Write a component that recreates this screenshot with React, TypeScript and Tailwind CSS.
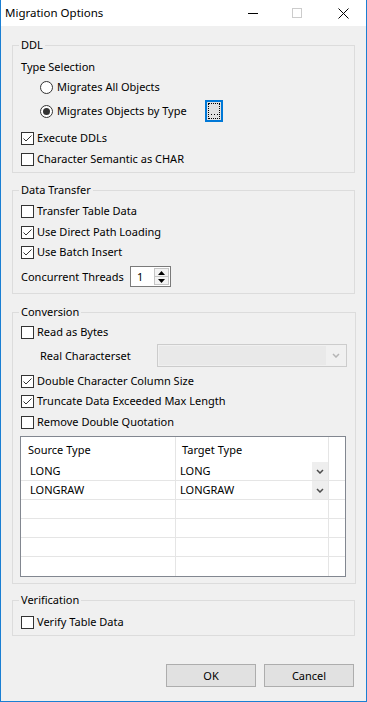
import type { ReactNode } from "react";

function CheckBox({ checked = false }: { checked?: boolean }) {
  return (
    <span className="flex h-[13px] w-[13px] shrink-0 items-center justify-center border border-[#333333] bg-white">
      {checked ? (
        <svg width="11" height="11" viewBox="0 0 11 11">
          <path d="M1.5 5.5L4 8L9.5 2.5" fill="none" stroke="#333333" strokeWidth="1" />
        </svg>
      ) : null}
    </span>
  );
}

function Radio({ checked = false }: { checked?: boolean }) {
  return (
    <span className="flex h-[13px] w-[13px] shrink-0 items-center justify-center rounded-full border border-[#333333] bg-white">
      {checked ? <span className="h-[7px] w-[7px] rounded-full bg-[#333333]" /> : null}
    </span>
  );
}

function CheckRow({
  label,
  checked,
  className = "",
}: {
  label: string;
  checked?: boolean;
  className?: string;
}) {
  return (
    <div className={`flex h-[16px] items-center gap-[3px] ${className}`}>
      <CheckBox checked={checked} />
      <span>{label}</span>
    </div>
  );
}

function GroupBox({
  title,
  className = "",
  children,
}: {
  title: string;
  className?: string;
  children: ReactNode;
}) {
  return (
    <fieldset className={`mx-[11px] border border-[#dcdcdc] px-[8px] ${className}`}>
      <legend className="ml-[-2px] px-[2px] leading-[16px]">{title}</legend>
      {children}
    </fieldset>
  );
}

function Chevron({ color = "#4d4d4d" }: { color?: string }) {
  return (
    <svg width="8" height="5" viewBox="0 0 8 5">
      <path d="M1 1L4 4L7 1" fill="none" stroke={color} strokeWidth="1.5" />
    </svg>
  );
}

const typeRows = [
  ["LONG", "LONG"],
  ["LONGRAW", "LONGRAW"],
  ["", ""],
  ["", ""],
  ["", ""],
  ["", ""],
];

export default function App() {
  return (
    <div className="flex h-[702px] w-[367px] flex-col border-x border-b border-[#1a7fd3] bg-[#f0f0f0] font-['Noto_Sans',sans-serif] text-[11px] leading-[16px] text-black">
      {/* title bar */}
      <div className="flex h-[26px] shrink-0 items-center bg-white">
        <span className="flex-1 pl-[4px] text-[11.5px]">Migration Options</span>
        <span className="flex h-full w-[46px] items-center justify-center pl-[3px]">
          <span className="h-px w-[10px] bg-black" />
        </span>
        <span className="flex h-full w-[46px] items-center justify-center">
          <span className="h-[10px] w-[10px] border border-[#cccccc]" />
        </span>
        <span className="flex h-full w-[46px] items-center justify-center">
          <svg width="11" height="11" viewBox="0 0 11 11">
            <path d="M0.5 0.5L10.5 10.5M10.5 0.5L0.5 10.5" stroke="#000000" strokeWidth="1" />
          </svg>
        </span>
      </div>

      <GroupBox title="DDL" className="mt-[11px] pb-[5px] pt-[6px]">
        <div className="h-[16px]">Type Selection</div>
        <div className="ml-[19px] mt-[4px] flex h-[16px] items-center gap-[4px]">
          <Radio />
          <span>Migrates All Objects</span>
        </div>
        <div className="ml-[19px] mt-[5px] flex h-[22px] items-center gap-[4px]">
          <Radio checked />
          <span className="w-[144px]">Migrates Objects by Type</span>
          <button
            type="button"
            aria-label="..."
            className="flex h-[22px] w-[18px] items-stretch border-2 border-[#0078d7] bg-[#e1e1e1] p-px"
          >
            <span className="flex flex-1 items-end justify-center gap-[2px] border border-dotted border-black pb-[3px]">
              <span className="h-px w-px bg-black" />
              <span className="h-px w-px bg-black" />
              <span className="h-px w-px bg-black" />
            </span>
          </button>
        </div>
        <CheckRow label="Execute DDLs" checked className="mt-[8px]" />
        <CheckRow label="Character Semantic as CHAR" className="mt-[5px]" />
      </GroupBox>

      <GroupBox title="Data Transfer" className="mt-[9px] pb-[6px] pt-[5px]">
        <CheckRow label="Transfer Table Data" />
        <CheckRow label="Use Direct Path Loading" checked className="mt-[5px]" />
        <CheckRow label="Use Batch Insert" checked className="mt-[4px]" />
        <div className="mt-[6px] flex h-[21px] items-center">
          <span className="w-[109px] whitespace-nowrap">Concurrent Threads</span>
          <div className="flex h-[21px] w-[41px] border border-[#7a7a7a] bg-white">
            <span className="flex flex-1 items-center pl-[6px]">1</span>
            <div className="my-[1px] mr-[1px] flex w-[15px] flex-col border border-[#c5c5c5]">
              <span className="flex flex-1 items-center justify-center border-b border-[#c5c5c5] bg-[#f3f3f3]">
                <svg width="7" height="4" viewBox="0 0 7 4">
                  <polygon points="0,4 3.5,0 7,4" fill="#000000" />
                </svg>
              </span>
              <span className="flex flex-1 items-center justify-center bg-[#f3f3f3]">
                <svg width="7" height="4" viewBox="0 0 7 4">
                  <polygon points="0,0 3.5,4 7,0" fill="#000000" />
                </svg>
              </span>
            </div>
          </div>
        </div>
      </GroupBox>

      <GroupBox title="Conversion" className="mt-[10px] pb-[6px] pt-[4px]">
        <CheckRow label="Read as Bytes" />
        <div className="mt-[4px] flex h-[23px] items-center">
          <span className="ml-[19px] w-[117px]">Real Characterset</span>
          <div className="flex h-[23px] w-[190px] border border-[#cccccc] bg-[#f0f0f0] p-px">
            <span className="flex-1 bg-[#e9e9e9]" />
            <span className="flex w-[19px] items-center justify-center">
              <Chevron color="#b5b5b5" />
            </span>
          </div>
        </div>
        <CheckRow label="Double Character Column Size" checked className="mt-[6px]" />
        <CheckRow label="Truncate Data Exceeded Max Length" checked className="mt-[4px]" />
        <CheckRow label="Remove Double Quotation" className="mt-[5px]" />

        <div className="ml-[-1px] mt-[6px] h-[141px] w-[326px] border border-[#828790] bg-white">
          <div className="flex h-[25px]">
            <div className="flex w-[155px] items-center border-r border-[#e5e5e5] pl-[7px]">
              Source Type
            </div>
            <div className="flex w-[153px] items-center border-r border-[#e5e5e5] pl-[6px]">
              Target Type
            </div>
            <div className="flex-1" />
          </div>
          {typeRows.map((row, i) => (
            <div
              key={i}
              className={`flex h-[19px] ${i < typeRows.length - 1 ? "border-b border-[#e5e5e5]" : ""}`}
            >
              <div className="flex w-[155px] items-center border-r border-[#e5e5e5] pl-[9px]">
                {row[0]}
              </div>
              <div className="flex w-[153px] items-center border-r border-[#e5e5e5] pl-[4px]">
                <span className="flex-1">{row[1]}</span>
                {row[1] ? (
                  <span className="flex h-full w-[16px] items-center justify-center bg-[#eeeeee]">
                    <Chevron />
                  </span>
                ) : null}
              </div>
              <div className="flex-1" />
            </div>
          ))}
        </div>
      </GroupBox>

      <GroupBox title="Verification" className="mt-[8px] pb-[5px] pt-[6px]">
        <CheckRow label="Verify Table Data" />
      </GroupBox>

      <div className="mr-[12px] mt-[28px] flex justify-end gap-[8px]">
        <button type="button" className="h-[23px] w-[90px] border border-[#adadad] bg-[#e1e1e1]">
          OK
        </button>
        <button type="button" className="h-[23px] w-[90px] border border-[#adadad] bg-[#e1e1e1]">
          Cancel
        </button>
      </div>
    </div>
  );
}
